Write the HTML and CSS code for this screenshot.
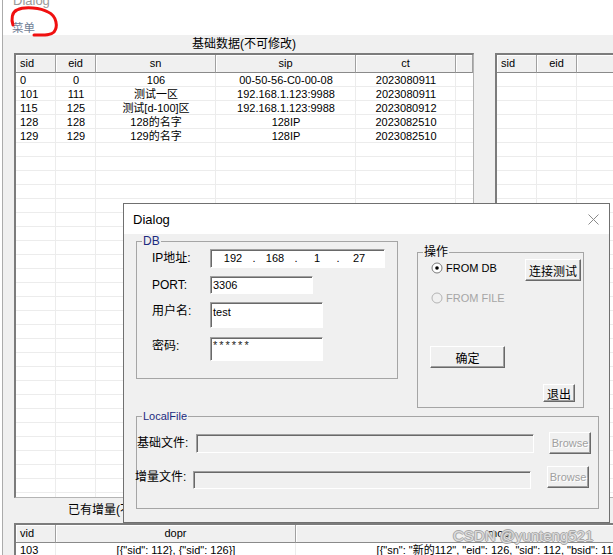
FILE: index.html
```html
<!DOCTYPE html>
<html lang="zh-CN">
<head>
<meta charset="utf-8">
<title>Dialog</title>
<link rel="stylesheet" href="styles.css">
</head>
<body>
<div class="app">
  <div class="caption-bar"><span class="caption-text">Dialog</span></div>
  <div class="menubar"><span class="menu">菜单</span></div>

  <div class="client">
    <div class="top-row">
      <section class="panel panel-base">
        <div class="panel-title">基础数据(不可修改)</div>
        <div class="grid grid-base">
          <div class="thead cols-base">
            <div class="th left">sid</div><div class="th">eid</div><div class="th">sn</div><div class="th">sip</div><div class="th">ct</div><div class="th"></div>
          </div>
          <div class="tbody lines-base">
            <div class="tr cols-base"><div class="td left">0</div><div class="td">0</div><div class="td">106</div><div class="td">00-50-56-C0-00-08</div><div class="td">2023080911</div><div class="td"></div></div>
            <div class="tr cols-base"><div class="td left">101</div><div class="td">111</div><div class="td">测试一区</div><div class="td">192.168.1.123:9988</div><div class="td">2023080911</div><div class="td"></div></div>
            <div class="tr cols-base"><div class="td left">115</div><div class="td">125</div><div class="td">测试[d-100]区</div><div class="td">192.168.1.123:9988</div><div class="td">2023080912</div><div class="td"></div></div>
            <div class="tr cols-base"><div class="td left">128</div><div class="td">128</div><div class="td">128的名字</div><div class="td">128IP</div><div class="td">2023082510</div><div class="td"></div></div>
            <div class="tr cols-base"><div class="td left">129</div><div class="td">129</div><div class="td">129的名字</div><div class="td">128IP</div><div class="td">2023082510</div><div class="td"></div></div>
          </div>
        </div>
      </section>
      <section class="panel panel-side">
        <div class="panel-title"></div>
        <div class="grid grid-side">
          <div class="thead cols-side">
            <div class="th left">sid</div><div class="th">eid</div><div class="th"></div>
          </div>
          <div class="tbody lines-side"></div>
        </div>
      </section>
    </div>
    <div class="sub-title">已有增量(不可修改)</div>
    <div class="grid grid-delta">
      <div class="thead cols-delta">
        <div class="th left">vid</div><div class="th">dopr</div><div class="th">mopr</div><div class="th"></div>
      </div>
      <div class="tbody lines-delta">
        <div class="tr cols-delta"><div class="td left">103</div><div class="td">[{"sid": 112}, {"sid": 126}]</div><div class="td">[{"sn": "新的112", "eid": 126, "sid": 112, "bsid": 115}]</div><div class="td"></div></div>
      </div>
    </div>
  </div>

  <svg class="scribble" width="70" height="45" viewBox="0 0 70 45">
    <path d="M10 25 C8 19 9 12 14 10 C22 6 38 8 45 12 C54 16 55 27 51 32 C47 36 40 35 31 35" fill="none" stroke="#f01010" stroke-width="3" stroke-linecap="round" stroke-linejoin="round"/>
  </svg>

  <div class="dialog">
    <div class="dlg-title">
      <span>Dialog</span>
      <svg class="dlg-close" width="11" height="11" viewBox="0 0 11 11"><path d="M0.5 0.5 L10.5 10.5 M10.5 0.5 L0.5 10.5" stroke="#8a8a8a" stroke-width="1"/></svg>
    </div>
    <div class="dlg-body">
      <fieldset class="group group-db">
        <legend class="legend-blue">DB</legend>
        <div class="db-form">
          <span class="lbl">IP地址:</span>
          <div class="field f-ip"><span class="seg">192</span><span class="dot">.</span><span class="seg">168</span><span class="dot">.</span><span class="seg">1</span><span class="dot">.</span><span class="seg">27</span></div>
          <span class="lbl">PORT:</span>
          <div class="field f-port">3306</div>
          <span class="lbl">用户名:</span>
          <div class="field f-user">test</div>
          <span class="lbl lbl-pwd">密码:</span>
          <div class="field f-pwd">******</div>
        </div>
      </fieldset>

      <fieldset class="group group-op">
        <legend>操作</legend>
        <div class="op">
          <div class="op-row">
            <span class="radio">
              <svg width="12" height="12" viewBox="0 0 12 12"><circle cx="6" cy="6" r="5" fill="#fff" stroke="#7a7a7a"/><circle cx="6" cy="6" r="1.8" fill="#000"/></svg>
              FROM DB
            </span>
            <button class="btn btn-test">连接测试</button>
          </div>
          <span class="radio radio-off">
            <svg width="12" height="12" viewBox="0 0 12 12"><circle cx="6" cy="6" r="5" fill="#f0f0f0" stroke="#b4b4b4"/></svg>
            FROM FILE
          </span>
          <button class="btn btn-ok">确定</button>
          <button class="btn btn-exit">退出</button>
        </div>
      </fieldset>

      <fieldset class="group group-file">
        <legend class="legend-blue legend-latin">LocalFile</legend>
        <div class="file-rows">
          <div class="file-row">
            <span class="file-lbl">基础文件:</span>
            <div class="field field-off f-file"></div>
            <button class="btn btn-off">Browse</button>
          </div>
          <div class="file-row file-row2">
            <span class="file-lbl">增量文件:</span>
            <div class="field field-off f-file"></div>
            <button class="btn btn-off">Browse</button>
          </div>
        </div>
      </fieldset>
    </div>
  </div>

  <div class="watermark">CSDN @yunteng521</div>
</div>
</body>
</html>
```

FILE: styles.css
```css
html, body {
  margin: 0;
  padding: 0;
  background: #fff;
}

body {
  font-family: "Liberation Sans", "Noto Sans CJK SC", sans-serif;
  color: #000;
}

.app {
  position: relative;
  width: 610px;
  height: 555px;
  margin-left: 2px;
  border-left: 1px solid #ababab;
  overflow: hidden;
  background: #fff;
}

/* ---------- window chrome ---------- */
.caption-bar {
  display: flow-root;
  height: 10px;
  padding-left: 10px;
  color: #9a9a9a;
  font-size: 13px;
}

.caption-text {
  display: block;
  margin-top: -6px;
  line-height: 13px;
}

.menubar {
  height: 25px;
  box-sizing: border-box;
  padding: 10px 0 0 9px;
  line-height: 14px;
}

.menu {
  font-size: 11.5px;
  color: #6f7e96;
}

.scribble {
  position: absolute;
  left: 0;
  top: 0;
}

/* ---------- client area ---------- */
.client {
  background: #f0f0f0;
  height: 520px;
  padding-left: 11px;
}

.top-row {
  display: flex;
  gap: 21px;
}

.panel {
  flex: none;
}

.panel-base {
  width: 460px;
}

.panel-side {
  width: 200px;
}

.panel-title {
  height: 18px;
  line-height: 18px;
  text-align: center;
  font-size: 12px;
}

.sub-title {
  height: 25px;
  line-height: 25px;
  padding-left: 54px;
  font-size: 12px;
}

/* ---------- list grids ---------- */
.grid {
  box-sizing: border-box;
  background: #fff;
  border-style: solid;
  border-width: 2px 1px 1px 2px;
  border-color: #7c7c7c #b4b4b4 #b4b4b4 #7c7c7c;
  display: flex;
  flex-direction: column;
  overflow: hidden;
}

.grid-base,
.grid-side {
  height: 445px;
}

.grid-delta {
  width: 720px;
  height: 40px;
  border-bottom: none;
}

.thead,
.tr {
  display: grid;
}

.cols-base {
  grid-template-columns: 40px 40px 120px 140px 100px 1fr;
}

.cols-side {
  grid-template-columns: 40px 40px 1fr;
}

.cols-delta {
  grid-template-columns: 40px 240px 410px 1fr;
}

.th {
  height: 18px;
  box-sizing: border-box;
  line-height: 17px;
  font-size: 11px;
  text-align: center;
  background: #f0f0f0;
  border-right: 1px solid #a0a0a0;
  border-bottom: 1px solid #8a8a8a;
  box-shadow: inset 1px 1px #fff;
  white-space: nowrap;
  overflow: hidden;
}

.th.left,
.td.left {
  text-align: left;
  padding-left: 4px;
}

.tbody {
  flex: 1;
  background-color: #fff;
}

.lines-base {
  background:
    linear-gradient(#ececec, #ececec) 39px 0 / 1px 100% no-repeat,
    linear-gradient(#ececec, #ececec) 79px 0 / 1px 100% no-repeat,
    linear-gradient(#ececec, #ececec) 199px 0 / 1px 100% no-repeat,
    linear-gradient(#ececec, #ececec) 339px 0 / 1px 100% no-repeat,
    linear-gradient(#ececec, #ececec) 439px 0 / 1px 100% no-repeat,
    repeating-linear-gradient(to bottom, transparent 0 13px, #ececec 13px 14px) #fff;
}

.lines-side {
  background:
    linear-gradient(#ececec, #ececec) 39px 0 / 1px 100% no-repeat,
    linear-gradient(#ececec, #ececec) 79px 0 / 1px 100% no-repeat,
    repeating-linear-gradient(to bottom, transparent 0 13px, #ececec 13px 14px) #fff;
}

.lines-delta {
  background:
    linear-gradient(#ececec, #ececec) 39px 0 / 1px 100% no-repeat,
    linear-gradient(#ececec, #ececec) 279px 0 / 1px 100% no-repeat,
    linear-gradient(#ececec, #ececec) 689px 0 / 1px 100% no-repeat,
    repeating-linear-gradient(to bottom, transparent 0 13px, #ececec 13px 14px) #fff;
}

.tr {
  height: 14px;
  line-height: 14px;
  font-size: 11px;
}

.td {
  text-align: center;
  white-space: nowrap;
  overflow: hidden;
}

/* ---------- dialog ---------- */
.dialog {
  position: absolute;
  left: 120px;
  top: 203px;
  width: 487px;
  height: 320px;
  box-sizing: border-box;
  border: 1px solid #707070;
  background: #f0f0f0;
  display: flex;
  flex-direction: column;
}

.dlg-title {
  flex: none;
  height: 30px;
  background: #fff;
  display: flex;
  align-items: center;
  padding-left: 9px;
  font-size: 13px;
}

.dlg-close {
  margin-left: auto;
  margin-right: 10px;
}

.dlg-body {
  display: grid;
  grid-template-columns: 262px 167px;
  column-gap: 19px;
  align-items: start;
  padding: 1px 0 0 12px;
}

.group {
  margin: 0;
  padding: 0;
  min-width: 0;
  box-sizing: border-box;
  border: 1px solid #a5a5a5;
}

.group legend {
  padding: 0 1px;
  margin-left: 5px;
  font-size: 12px;
  line-height: 12px;
}

.legend-blue {
  color: #1c2a7e;
}

.group .legend-latin {
  font-size: 11px;
}

.group-db {
  height: 144px;
}

.group-op {
  height: 162px;
  margin-top: 11px;
}

.group-file {
  grid-column: 1 / span 2;
  width: 463px;
  height: 99px;
  margin-top: 2px;
}

/* DB form */
.db-form {
  display: grid;
  grid-template-columns: 58px auto;
  row-gap: 8px;
  align-items: start;
  justify-items: start;
  padding: 2px 0 0 15px;
}

.lbl {
  font-size: 12px;
  line-height: 18px;
}

.lbl-pwd {
  margin-top: 1px;
}

.field {
  box-sizing: border-box;
  border: 1px solid;
  border-color: #a0a0a0 #fff #fff #a0a0a0;
  box-shadow: inset 1px 1px #696969;
  background: #fff;
  font-size: 11px;
}

.field-off {
  background: #f0f0f0;
}

.f-ip {
  width: 175px;
  height: 19px;
  display: flex;
  padding-left: 8px;
  line-height: 17px;
}

.f-ip .seg {
  width: 28px;
  text-align: center;
}

.f-ip .dot {
  width: 14px;
  text-align: center;
}

.f-port {
  width: 103px;
  height: 18px;
  line-height: 16px;
  padding-left: 2px;
}

.f-user {
  width: 113px;
  height: 26px;
  line-height: 14px;
  padding: 2px 0 0 2px;
}

.f-pwd {
  width: 113px;
  height: 24px;
  line-height: 14px;
  padding: 0 0 0 2px;
  margin-top: 1px;
  letter-spacing: 2px;
  color: #222;
}

/* operations */
.op {
  display: flex;
  flex-direction: column;
  align-items: flex-start;
  padding: 1px 2px 0 13px;
}

.op-row {
  align-self: stretch;
  display: flex;
  justify-content: space-between;
  align-items: flex-start;
}

.radio {
  display: flex;
  align-items: center;
  gap: 3px;
  height: 18px;
  line-height: 18px;
  font-size: 11px;
}

.radio-off {
  margin-top: 8px;
  color: #a6a6a6;
}

.btn {
  box-sizing: border-box;
  margin: 0;
  padding: 0;
  background: #f0f0f0;
  border: 1px solid;
  border-color: #fff #696969 #696969 #fff;
  box-shadow: inset -1px -1px #a0a0a0;
  font-family: inherit;
  font-size: 12px;
  color: #000;
  display: flex;
  align-items: center;
  justify-content: center;
}

.btn-test {
  width: 56px;
  height: 22px;
}

.btn-ok {
  width: 75px;
  height: 22px;
  margin: 39px 0 0 -1px;
}

.btn-exit {
  align-self: flex-end;
  width: 32px;
  height: 18px;
  margin: 16px 6px 0 0;
}

/* local file */
.file-rows {
  padding-top: 10px;
}

.file-row {
  display: flex;
  align-items: flex-start;
  height: 22px;
}

.file-lbl {
  width: 59px;
  flex: none;
  font-size: 12px;
  line-height: 22px;
  white-space: nowrap;
}

.f-file {
  width: 338px;
  height: 19px;
  margin-top: 2px;
  flex: none;
}

.btn-off {
  width: 42px;
  height: 22px;
  margin-left: 15px;
  font-size: 11px;
  color: #a0a0a0;
  text-shadow: 1px 1px #fff;
}

.file-row2 {
  margin-top: 12px;
}

.file-row2 .file-lbl {
  width: 58px;
  margin-left: -2px;
}

.file-row2 .f-file {
  height: 18px;
  margin-top: 5px;
}

.file-row2 .btn-off {
  margin-left: 16px;
}

/* watermark overlay */
.watermark {
  position: absolute;
  left: 450px;
  top: 528px;
  font-size: 15px;
  line-height: 16px;
  color: rgba(235, 235, 235, 0.8);
  text-shadow: 1px 0 #a8a8a8, -1px 0 #a8a8a8, 0 1px #a8a8a8, 0 -1px #a8a8a8;
  white-space: nowrap;
}
```
